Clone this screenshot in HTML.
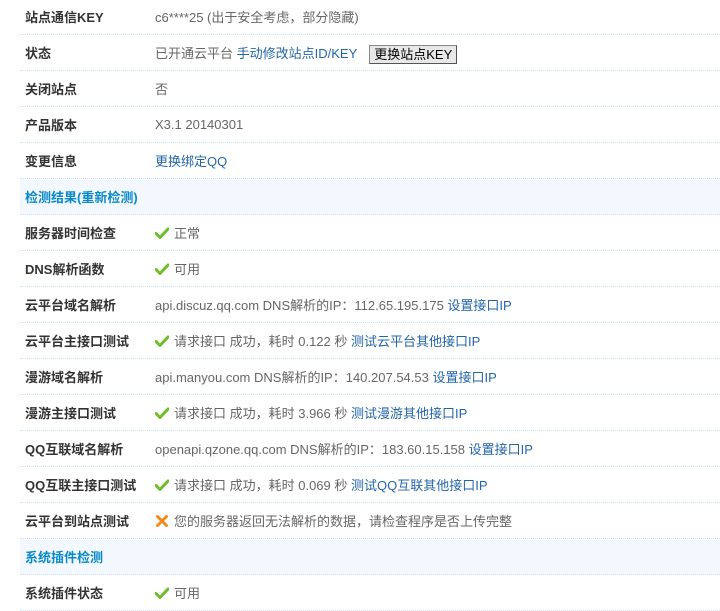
<!DOCTYPE html>
<html><head><meta charset="utf-8"><style>
body{margin:0;width:720px;height:606px;overflow:hidden;background:#fff;font-family:"Liberation Sans","Noto Sans CJK SC",sans-serif;font-size:13px;color:#666}
.w{position:absolute;left:20px;top:-1px;width:700px}
.r{height:35px;border-bottom:1px dotted #cfe3f2;display:flex;align-items:center;position:relative}
.l{width:135px;padding-left:5px;box-sizing:border-box;font-weight:bold;color:#333;font-size:13px}
.h{background:#f2f8fd}
.h .l{color:#0a89c9;width:auto}
a{color:#2366a8;text-decoration:none}
.btn{display:inline-block;margin-left:12px;background:#e8e8e8;border:1px solid #888;border-right-color:#555;border-bottom-color:#555;color:#000;padding:1px 4px;font-size:13px;line-height:15px;position:relative;top:1px}
.ok{display:inline-block;width:14px;height:12px;margin-right:5px;vertical-align:-1px}
</style></head><body>
<svg width="0" height="0" style="position:absolute"><defs>
<symbol id="ck" viewBox="0 0 14 12"><path d="M1 6.5 L5 10.5 L13 2" fill="none" stroke="#6cbf2a" stroke-width="3" stroke-linecap="round" stroke-linejoin="round"/></symbol>
<symbol id="x" viewBox="0 0 14 12"><path d="M2.5 1.5 L11.5 10.5 M11.5 1.5 L2.5 10.5" stroke="#f08a1c" stroke-width="3" stroke-linecap="round"/></symbol>
</defs></svg>
<div class="w">
<div class="r"><div class="l">站点通信KEY</div><div>c6****25 (出于安全考虑，部分隐藏)</div></div>
<div class="r"><div class="l">状态</div><div>已开通云平台 <a>手动修改站点ID/KEY</a><span class="btn">更换站点KEY</span></div></div>
<div class="r"><div class="l">关闭站点</div><div>否</div></div>
<div class="r"><div class="l">产品版本</div><div>X3.1 20140301</div></div>
<div class="r"><div class="l">变更信息</div><div><a>更换绑定QQ</a></div></div>
<div class="r h"><div class="l">检测结果(重新检测)</div></div>
<div class="r"><div class="l">服务器时间检查</div><div><svg class="ok"><use href="#ck"/></svg>正常</div></div>
<div class="r"><div class="l">DNS解析函数</div><div><svg class="ok"><use href="#ck"/></svg>可用</div></div>
<div class="r"><div class="l">云平台域名解析</div><div>api.discuz.qq.com DNS解析的IP：112.65.195.175 <a>设置接口IP</a></div></div>
<div class="r"><div class="l">云平台主接口测试</div><div><svg class="ok"><use href="#ck"/></svg>请求接口 成功，耗时 0.122 秒 <a>测试云平台其他接口IP</a></div></div>
<div class="r"><div class="l">漫游域名解析</div><div>api.manyou.com DNS解析的IP：140.207.54.53 <a>设置接口IP</a></div></div>
<div class="r"><div class="l">漫游主接口测试</div><div><svg class="ok"><use href="#ck"/></svg>请求接口 成功，耗时 3.966 秒 <a>测试漫游其他接口IP</a></div></div>
<div class="r"><div class="l">QQ互联域名解析</div><div>openapi.qzone.qq.com DNS解析的IP：183.60.15.158 <a>设置接口IP</a></div></div>
<div class="r"><div class="l">QQ互联主接口测试</div><div><svg class="ok"><use href="#ck"/></svg>请求接口 成功，耗时 0.069 秒 <a>测试QQ互联其他接口IP</a></div></div>
<div class="r"><div class="l">云平台到站点测试</div><div><svg class="ok"><use href="#x"/></svg>您的服务器返回无法解析的数据，请检查程序是否上传完整</div></div>
<div class="r h"><div class="l">系统插件检测</div></div>
<div class="r"><div class="l">系统插件状态</div><div><svg class="ok"><use href="#ck"/></svg>可用</div></div>
</div>
</body></html>
